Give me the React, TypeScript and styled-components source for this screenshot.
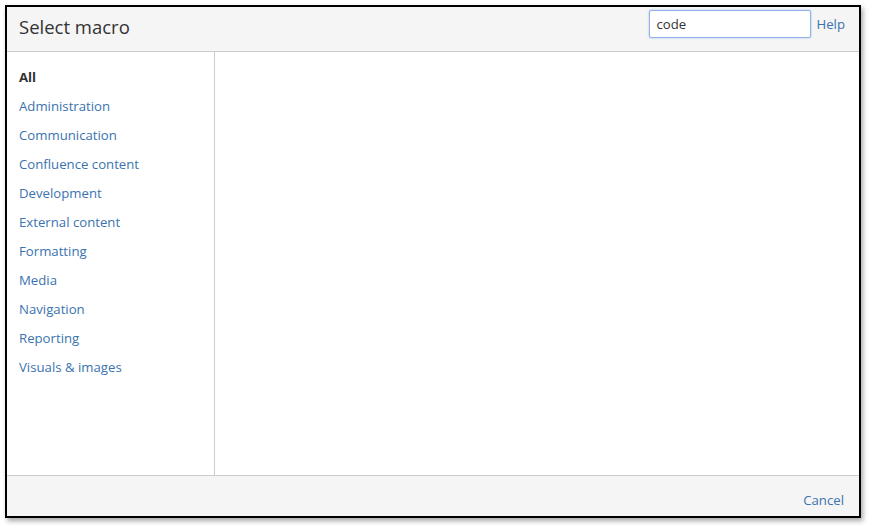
import React from "react";
import styled, { createGlobalStyle } from "styled-components";

const GlobalStyle = createGlobalStyle`
  html, body {
    margin: 0;
    padding: 0;
    background: #fff;
    font-family: "Open Sans", "Noto Sans", "Liberation Sans", sans-serif;
  }
`;

const Page = styled.div`
  width: 870px;
  height: 527px;
  padding: 5px 0 0 5px;
  box-sizing: border-box;
`;

const Dialog = styled.div`
  width: 856px;
  height: 513px;
  box-sizing: border-box;
  border: 2px solid #000;
  background: #fff;
  box-shadow: 2px 3px 5px rgba(0, 0, 0, 0.35);
  display: flex;
  flex-direction: column;
`;

const Header = styled.div`
  height: 45px;
  box-sizing: border-box;
  background: #f5f5f5;
  border-bottom: 1px solid #cccccc;
  display: flex;
  align-items: center;
  padding: 0 14px 5px 12px;
`;

const Title = styled.h2`
  margin: 0;
  flex: 1;
  font-size: 18.5px;
  font-weight: 400;
  color: #333333;
`;

const Search = styled.input`
  width: 162px;
  height: 28px;
  box-sizing: border-box;
  border: 1px solid #8fb3e8;
  border-radius: 2px;
  box-shadow: 0 0 2px rgba(80, 130, 220, 0.5);
  padding: 0 6px;
  margin-top: -5px;
  font-family: inherit;
  font-size: 13.2px;
  color: #333;
  outline: none;
`;

const Link = styled.a`
  color: #3b73af;
  font-size: 13.2px;
  text-decoration: none;
  cursor: pointer;
`;

const HelpLink = styled(Link)`
  margin-left: 5px;
  margin-top: -6px;
`;

const Body = styled.div`
  flex: 1;
  display: flex;
  min-height: 0;
`;

const Sidebar = styled.ul`
  width: 208px;
  box-sizing: border-box;
  border-right: 1px solid #cccccc;
  margin: 0;
  padding: 11px 0 0 12px;
  list-style: none;
`;

const Category = styled.li<{ $active?: boolean }>`
  height: 29px;
  line-height: 29px;
  font-size: 13.2px;
  color: ${(p) => (p.$active ? "#333333" : "#3b73af")};
  font-weight: ${(p) => (p.$active ? 700 : 400)};
  cursor: pointer;
`;

const Results = styled.div`
  flex: 1;
`;

const Footer = styled.div`
  height: 41px;
  box-sizing: border-box;
  background: #f5f5f5;
  border-top: 1px solid #cccccc;
  display: flex;
  align-items: center;
  justify-content: flex-end;
  padding: 8px 15px 0 0;
`;

const categories = [
  "All",
  "Administration",
  "Communication",
  "Confluence content",
  "Development",
  "External content",
  "Formatting",
  "Media",
  "Navigation",
  "Reporting",
  "Visuals & images",
];

export default function App() {
  return (
    <>
      <GlobalStyle />
      <Page>
        <Dialog>
          <Header>
            <Title>Select macro</Title>
            <Search defaultValue="code" />
            <HelpLink>Help</HelpLink>
          </Header>
          <Body>
            <Sidebar>
              {categories.map((c, i) => (
                <Category key={c} $active={i === 0}>
                  {c}
                </Category>
              ))}
            </Sidebar>
            <Results />
          </Body>
          <Footer>
            <Link>Cancel</Link>
          </Footer>
        </Dialog>
      </Page>
    </>
  );
}
